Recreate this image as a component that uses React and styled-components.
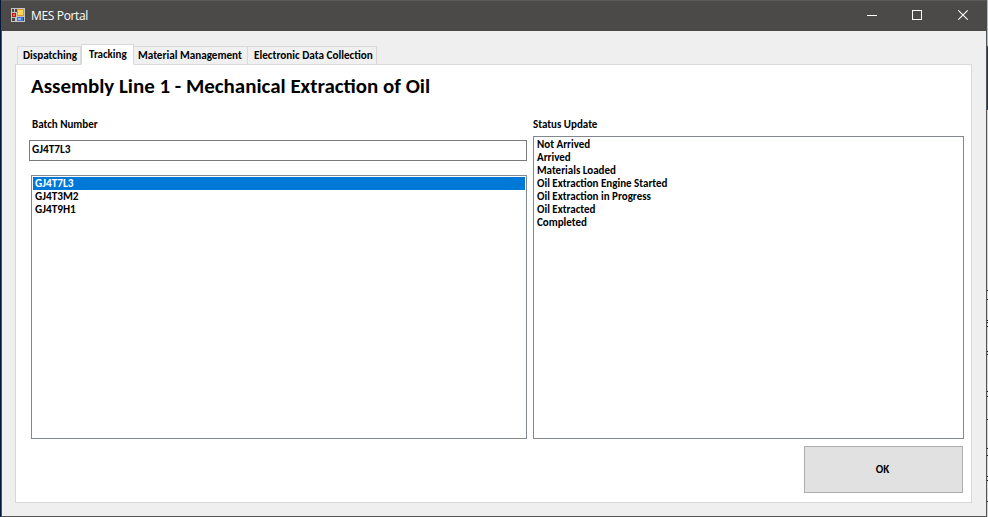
import React from "react";
import styled, { createGlobalStyle } from "styled-components";

const GlobalStyle = createGlobalStyle`
  * { box-sizing: border-box; }
  html, body { margin: 0; padding: 0; overflow: hidden; }
`;

const Desktop = styled.div`
  display: grid;
  grid-template-columns: 1px 986px 1px;
  width: 988px;
  height: 517px;
  font: 700 11px/13px Carlito, Lato, sans-serif;
  color: #000;
  white-space: nowrap;
`;

const LeftEdge = styled.div`
  background: #06183a;
`;

const RightEdge = styled.div`
  display: flex;
  flex-direction: column;
  background: linear-gradient(#a9bccb 46px, #555 46px 47px, #1d3765 47px 110px, #d6d6d6 110px);
`;

const EdgeMark = styled.i`
  flex: none;
  height: 1px;
  margin-top: ${(p) => p.$gap}px;
  background: #161616;
`;

const Window = styled.main`
  display: flex;
  flex-direction: column;
  background: #efefef;
  border: solid #555454;
  border-width: 0 1px 1px;
`;

const TitleBar = styled.header`
  display: flex;
  align-items: center;
  height: 31px;
  margin: 0 -1px;
  padding: 0 1px 0 10px;
  border-top: 1px solid #5c5b59;
  background: #4c4a48;
`;

const WindowTitle = styled.span`
  flex: 1;
  margin-left: 6px;
  color: #fff;
  font: 400 12px/16px "Open Sans", sans-serif;
  letter-spacing: -0.35px;
`;

const Caption = styled.svg`
  display: block;
  width: 46px;
  height: 30px;
`;

const AppIcon = styled.svg`
  display: block;
  width: 14px;
  height: 14px;
  margin-top: -2px;
`;

const Tabs = styled.nav`
  display: flex;
  align-items: flex-end;
  height: 21px;
  margin: 13px 0 -1px 15px;
  z-index: 1;
`;

const Tab = styled.div`
  flex: none;
  width: ${(p) => p.$width}px;
  height: ${(p) => (p.$active ? 21 : 19)}px;
  padding: ${(p) => (p.$active ? 3 : 2)}px 0 0 ${(p) => p.$inset}px;
  border: 1px solid #d9d9d9;
  border-left-width: ${(p) => (p.$joined ? 0 : 1)}px;
  border-bottom-color: ${(p) => (p.$active ? "#fff" : "#d9d9d9")};
  background: ${(p) => (p.$active ? "#fff" : "#f0f0f0")};
`;

const Text = styled.span`
  display: block;
  font-size: ${(p) => p.$size || 11}px;
`;

const Panel = styled.section`
  width: 957px;
  height: 439px;
  margin-left: 13px;
  padding: 8px 7px 9px 13px;
  border: 1px solid #d9d9d9;
  background: #fff;
`;

const Heading = styled.h1`
  margin: 0 0 0 2px;
  height: 45px;
  font-size: 20.95px;
  line-height: 26px;
`;

const Columns = styled.div`
  display: flex;
  justify-content: space-between;
`;

const Column = styled.div`
  width: ${(p) => p.$width}px;
`;

const Label = styled.label`
  display: block;
  height: ${(p) => p.$height}px;
  padding-left: ${(p) => p.$inset}px;
`;

const Field = styled.div`
  height: 21px;
  padding: 2px 2px;
  border: 1px solid #7a7a7a;
`;

const ListBox = styled.div`
  height: ${(p) => p.$height}px;
  margin: ${(p) => p.$margin || 0};
  padding: 1px;
  border: 1px solid #828790;
`;

const Option = styled.div`
  height: 13px;
  padding-left: 2px;
  color: ${(p) => (p.$selected ? "#fff" : "#000")};
  background: ${(p) => (p.$selected ? "#0078d7" : "transparent")};
`;

const OkButton = styled.button`
  display: block;
  width: 159px;
  height: 47px;
  margin: 7px 1px 0 auto;
  padding: 0 2px 0 0;
  border: 1px solid #adadad;
  background: #e1e1e1;
  font: inherit;
  color: #000;
`;

const tabs = [
  { name: "Dispatching", width: 64, inset: 5, size: 11.15 },
  { name: "Tracking", width: 53, inset: 7, active: true },
  { name: "Material Management", width: 114, inset: 4, size: 11.15, joined: true },
  { name: "Electronic Data Collection", width: 129, inset: 6, size: 11.2, joined: true },
];
const batches = ["GJ4T7L3", "GJ4T3M2", "GJ4T9H1"];
const statuses = [
  "Not Arrived",
  "Arrived",
  "Materials Loaded",
  "Oil Extraction Engine Started",
  "Oil Extraction in Progress",
  "Oil Extracted",
  "Completed",
];
const edgeMarks = [290, 8, 20, 1, 3, 24, 2, 36, 4, 22, 28, 6, 20, 3, 20];

export default function App() {
  return (
    <>
      <GlobalStyle />
      <Desktop>
        <LeftEdge />
        <Window>
          <TitleBar>
            <AppIcon viewBox="0 0 14 14" shapeRendering="crispEdges">
              <path d="M0 0h14v14H0z" fill="#c4c4c4" />
              <path d="M1 1h2v3H1zM4 1h2v3H4zM1 10h3v3H1zM12 9h1v4h-1z" fill="#4c4a48" />
              <path d="M6 1h7v7H6z" fill="#d99a16" />
              <path d="M7 2h5v5H7z" fill="#ffd65a" />
              <path d="M1 5h4v4H1z" fill="#b51a14" />
              <path d="M2 6h2v2H2z" fill="#ef6959" />
              <path d="M6 9h6v4H6z" fill="#4277cb" />
              <path d="M7 10h3v2H7z" fill="#82b4f4" />
            </AppIcon>
            <WindowTitle>MES Portal</WindowTitle>
            <Caption viewBox="0 0 46 30" shapeRendering="crispEdges">
              <path d="M19 14h10v1H19z" fill="#fff" />
            </Caption>
            <Caption viewBox="0 0 46 30" shapeRendering="crispEdges">
              <path d="M18.5 9.5h9v9h-9z" fill="none" stroke="#fff" />
            </Caption>
            <Caption viewBox="0 0 46 30">
              <path d="M18.3 9.3l9.4 9.4M27.7 9.3l-9.4 9.4" stroke="#fff" strokeWidth="1.1" />
            </Caption>
          </TitleBar>
          <Tabs>
            {tabs.map((t) => (
              <Tab key={t.name} $width={t.width} $inset={t.inset} $active={t.active} $joined={t.joined}>
                <Text $size={t.size}>{t.name}</Text>
              </Tab>
            ))}
          </Tabs>
          <Panel>
            <Heading>Assembly Line 1 - Mechanical Extraction of Oil</Heading>
            <Columns>
              <Column $width={498}>
                <Label $height={22} $inset={3}>
                  <Text>Batch Number</Text>
                </Label>
                <Field>
                  <Text $size={11.3}>GJ4T7L3</Text>
                </Field>
                <ListBox $height={264} $margin="14px 0 0 2px">
                  {batches.map((b, i) => (
                    <Option key={b} $selected={i === 0}>
                      <Text $size={11.3}>{b}</Text>
                    </Option>
                  ))}
                </ListBox>
              </Column>
              <Column $width={431}>
                <Label $height={18} $inset={0}>
                  <Text>Status Update</Text>
                </Label>
                <ListBox $height={303}>
                  {statuses.map((s) => (
                    <Option key={s}>
                      <Text>{s}</Text>
                    </Option>
                  ))}
                </ListBox>
              </Column>
            </Columns>
            <OkButton>OK</OkButton>
          </Panel>
        </Window>
        <RightEdge>
          {edgeMarks.map((gap, i) => (
            <EdgeMark key={i} $gap={gap} />
          ))}
        </RightEdge>
      </Desktop>
    </>
  );
}
